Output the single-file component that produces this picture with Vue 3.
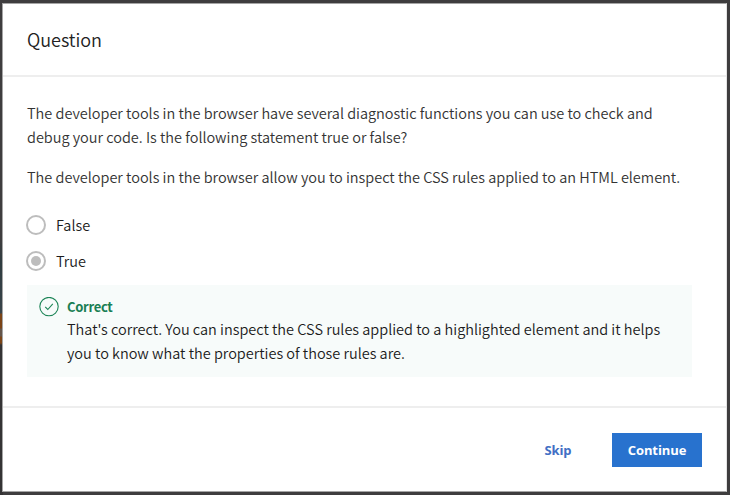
<script setup>
import { ref } from 'vue'

const options = ['False', 'True']
const selected = ref('True')
</script>

<template>
  <div class="backdrop">
    <section class="dialog" role="dialog" aria-labelledby="title">
      <header class="head">
        <h1 id="title">Question</h1>
      </header>
      <main class="body">
        <p class="intro">The developer tools in the browser have several diagnostic functions you can use to check and<br>debug your code. Is the following statement true or false?</p>
        <p class="statement">The developer tools in the browser allow you to inspect the CSS rules applied to an HTML element.</p>
        <div class="options">
          <label v-for="option in options" :key="option" class="option">
            <svg class="radio" viewBox="0 0 20 20">
              <circle cx="10" cy="10" r="9" fill="#fff" stroke="#bdbdbd" stroke-width="2" />
              <circle v-if="option === selected" cx="10" cy="10" r="5" fill="#bdbdbd" />
            </svg>
            <span>{{ option }}</span>
          </label>
        </div>
        <div class="feedback">
          <svg class="check" viewBox="0 0 20 20" fill="none" stroke="#1d8557">
            <circle cx="10" cy="9.6" r="9.2" stroke-width="1.1" />
            <path d="M6.2 9.8 L8.8 12.5 L13.8 6.8" stroke-width="1.1" />
          </svg>
          <div>
            <strong>Correct</strong>
            <p>That's correct. You can inspect the CSS rules applied to a highlighted element and it helps<br>you to know what the properties of those rules are.</p>
          </div>
        </div>
      </main>
      <footer class="foot">
        <button class="skip">Skip</button>
        <button class="continue">Continue</button>
      </footer>
    </section>
  </div>
</template>

<style>
body { margin: 0; }
</style>

<style scoped>
* { box-sizing: border-box; }
.backdrop {
  width: 730px;
  height: 495px;
  padding: 3px 3px 3px 2px;
  background:
    linear-gradient(to bottom, #3e3d3e 240px, #2f3c40 262px, #39444a 313px, #7b4417 314px, #7b4417 328px, #64554a 329px, #64554a 336px, #7b4417 337px, #7b4417 343px, #343334 345px) left / 3px 100% no-repeat,
    #3e3d3e;
  font-family: "Noto Sans CJK SC", "Noto Sans", sans-serif;
}
.dialog {
  height: 489px;
  display: flex;
  flex-direction: column;
  background: #fff;
  border: 1px solid #a5a5a5;
  border-right-color: #e4e4e4;
}
.head {
  height: 73px;
  padding: 0 24px 2px;
  display: flex;
  align-items: center;
  border-bottom: 2px solid #eee;
}
h1 {
  margin: 0;
  font-size: 18px;
  font-weight: 350;
  line-height: 24px;
  letter-spacing: -0.02px;
  color: #222;
}
p { margin: 0; white-space: nowrap; }
.body {
  height: 329px;
  padding: 24px 24px 0;
  font-size: 14.5px;
  font-weight: 350;
  line-height: 24px;
  letter-spacing: -0.012px;
  color: #333;
}
.statement { margin-top: 16px; }
.options {
  margin: 24px 0 0 -1px;
  display: flex;
  flex-direction: column;
  gap: 12px;
  color: #1c1c1c;
}
.option { display: flex; gap: 10px; height: 24px; }
.radio { width: 20px; height: 20px; flex: none; margin-top: 1.5px; }
.feedback {
  display: flex;
  gap: 8px;
  width: 665px;
  height: 92px;
  margin-top: 12px;
  padding: 12px;
  background: #f7fbfa;
  color: #1c1c1c;
}
.check { width: 20px; height: 20px; flex: none; }
strong {
  display: block;
  font-size: 13px;
  font-weight: 700;
  line-height: 20px;
  letter-spacing: -0.3px;
  color: #1b7f54;
}
.foot {
  flex: 1;
  padding: 0 24px;
  border-top: 2px solid #eee;
  display: flex;
  justify-content: flex-end;
  align-items: center;
  gap: 24px;
}
button {
  height: 34px;
  padding: 0;
  border: 0;
  background: none;
  font: 700 13px/34px "Open Sans", sans-serif;
  letter-spacing: -0.1px;
}
.skip { width: 60px; color: #426fc4; }
.continue { width: 90px; background: #2872ce; color: #fff; }
</style>
